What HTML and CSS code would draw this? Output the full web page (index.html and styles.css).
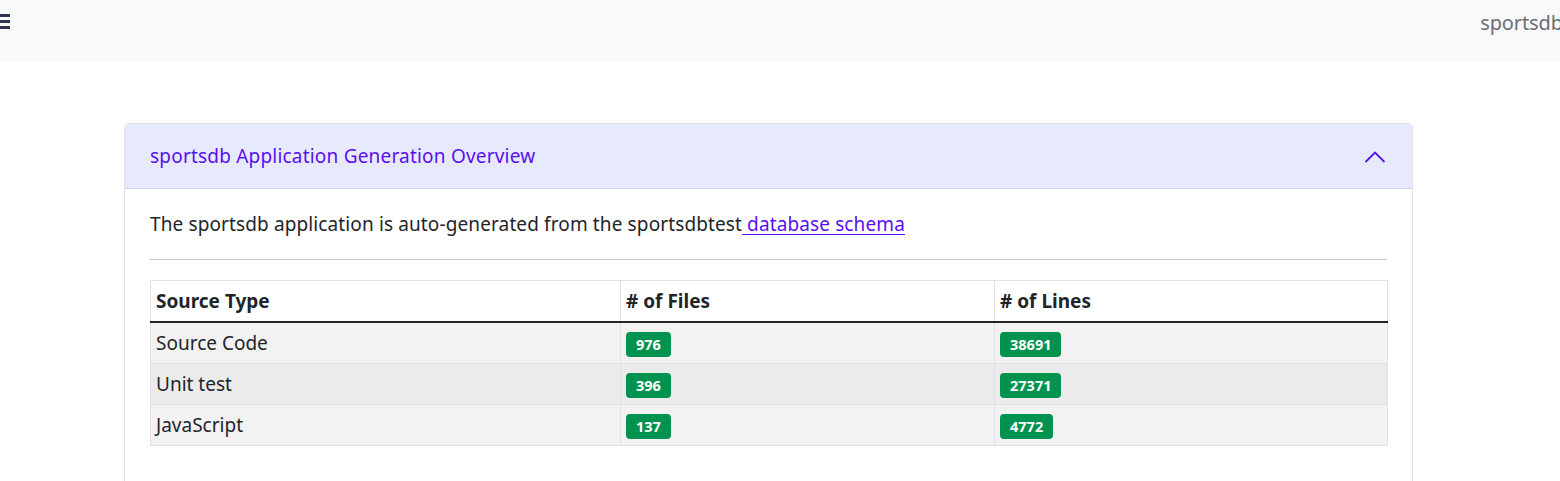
FILE: index.html
```html
<!DOCTYPE html>
<html>
<head>
<meta charset="utf-8">
<link rel="stylesheet" href="styles.css">
</head>
<body>
<nav class="navbar">
  <svg class="burger" width="10" height="16" viewBox="0 0 10 16"><rect x="0" y="0" width="10" height="3" fill="#33354f"/><rect x="0" y="6" width="10" height="3" fill="#33354f"/><rect x="0" y="12" width="10" height="3" fill="#33354f"/></svg>
  <span class="brand">sportsdb</span>
</nav>
<main class="main">
  <section class="card">
    <div class="card-header">
      <span class="title">sportsdb Application Generation Overview</span>
      <svg class="chevron" width="22" height="14" viewBox="0 0 22 14"><path d="M1.5 12 L11 2.5 L20.5 12" fill="none" stroke="#5a0ff0" stroke-width="1.8"/></svg>
    </div>
    <div class="card-body">
      <p class="intro">The sportsdb application is auto-generated from the sportsdbtest<a href="#"> database schema</a></p>
      <hr class="divider">
      <table class="stats">
        <thead>
          <tr><th class="c1">Source Type</th><th class="c2"># of Files</th><th class="c3"># of Lines</th></tr>
        </thead>
        <tbody>
          <tr class="odd"><td>Source Code</td><td><span class="badge">976</span></td><td><span class="badge">38691</span></td></tr>
          <tr class="even"><td>Unit test</td><td><span class="badge">396</span></td><td><span class="badge">27371</span></td></tr>
          <tr class="odd"><td>JavaScript</td><td><span class="badge">137</span></td><td><span class="badge">4772</span></td></tr>
        </tbody>
      </table>
    </div>
  </section>
</main>
</body>
</html>
```
FILE: styles.css
```css
html, body {
  margin: 0;
  padding: 0;
  background: #ffffff;
  overflow: hidden;
}
body {
  font-family: "Noto Sans", "Open Sans", sans-serif;
  color: #212529;
  width: 1560px;
  height: 481px;
}
.navbar {
  height: 62px;
  background: #f8f9fa;
  display: flex;
  justify-content: space-between;
  align-items: flex-start;
  overflow: hidden;
}
.burger {
  display: block;
  margin-top: 14px;
}
.brand {
  font-size: 20px;
  color: #6d6d72;
  margin-top: 9px;
  margin-right: -3px;
  letter-spacing: -0.1px;
}
.main {
  padding: 61px 0 0 124px;
}
.card {
  width: 1287px;
  border: 1px solid #dfe1ea;
  border-bottom: none;
  border-radius: 5px 5px 0 0;
  height: 357px;
  overflow: hidden;
}
.card-header {
  height: 64px;
  background: #e7eafd;
  border-bottom: 1px solid #cfd3ec;
  border-radius: 5px 5px 0 0;
  display: flex;
  align-items: center;
  justify-content: space-between;
  padding: 0 26px 0 25px;
}
.title {
  color: #5a0ff0;
  font-size: 19px;
  letter-spacing: 0.2px;
  margin-top: -1px;
}
.chevron {
  display: block;
  margin-top: 2px;
}
.card-body {
  padding: 23px 25px 0 25px;
}
.intro {
  margin: 0;
  font-size: 19px;
  line-height: 24px;
  letter-spacing: 0.12px;
  color: #212529;
}
.intro a {
  color: #5a0ff0;
  text-decoration: underline;
  text-underline-offset: 3px;
}
.divider {
  margin: 23px 0 20px 0;
  border: 0;
  border-top: 1px solid #c8c8c8;
}
.stats {
  width: 1238px;
  border-collapse: collapse;
  font-size: 19px;
}
.stats th, .stats td {
  border: 1px solid #dee2e6;
  text-align: left;
  padding: 0 5px;
  vertical-align: middle;
}
.stats th {
  height: 40px;
  font-weight: 700;
  border-bottom: 2px solid #212529;
  background: #ffffff;
}
.stats td {
  height: 40px;
}
.c1 { width: 459px; }
.c2 { width: 363px; }
.odd td { background: #f2f2f2; }
.even td { background: #ebebeb; }
.badge {
  display: inline-block;
  background: #009350;
  color: #ffffff;
  font-size: 14.5px;
  font-weight: 700;
  line-height: 25px;
  padding: 0 10px;
  border-radius: 4px;
  margin-top: 2px;
}
```
